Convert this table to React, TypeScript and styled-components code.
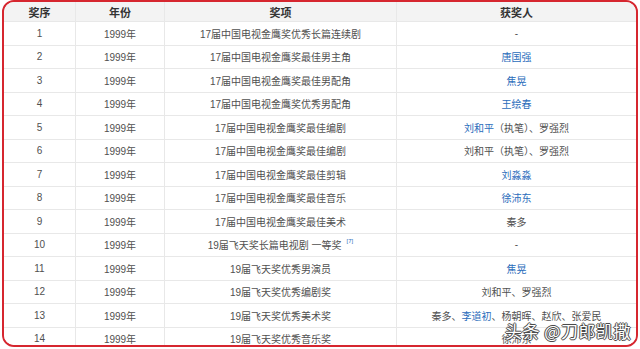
import * as React from "react"
import styled, { createGlobalStyle } from "styled-components"

const GlobalStyle = createGlobalStyle`
  html, body {
    margin: 0;
    padding: 0;
    background: #ffffff;
  }
  body {
    font-family: "Liberation Sans", "Noto Sans CJK SC", sans-serif;
  }
`

const Page = styled.div`
  position: relative;
  width: 640px;
  height: 349px;
  overflow: hidden;
  background: #ffffff;
`

const Frame = styled.div`
  box-sizing: border-box;
  width: 636px;
  height: 347px;
  margin-left: 2px;
  border: 2px solid #d6262f;
  border-radius: 12px;
  overflow: hidden;
`

const Row = styled.div<{ $head?: boolean }>`
  box-sizing: border-box;
  display: grid;
  grid-template-columns: 72px 89px 232px 1fr;
  height: ${(p) => (p.$head ? "20px" : "23.5px")};
  background: ${(p) => (p.$head ? "#f3f3f3" : "#ffffff")};
  border-bottom: 1px solid #e8e8e8;
  font-size: ${(p) => (p.$head ? "11px" : "10px")};
  font-weight: ${(p) => (p.$head ? "bold" : "normal")};
  color: ${(p) => (p.$head ? "#333333" : "#505050")};
`

const Cell = styled.div`
  display: flex;
  align-items: center;
  justify-content: center;
  border-right: 1px solid #e8e8e8;
  white-space: nowrap;

  &:last-child {
    border-right: none;
  }
`

const Link = styled.span`
  color: #2a6cbb;
`

const Ref = styled.sup`
  color: #2a6cbb;
  font-size: 6px;
  margin-left: 5px;
  position: relative;
  top: -2px;
`

const Watermark = styled.div`
  position: absolute;
  left: 505px;
  top: 318px;
  font-family: "Noto Sans CJK SC", sans-serif;
  font-size: 17px;
  color: #ffffff;
  letter-spacing: 0.5px;
  text-shadow: -1px 0 #4a4a4a, 1px 0 #4a4a4a, 0 -1px #4a4a4a, 0 1px #4a4a4a,
    0 0 2px rgba(0, 0, 0, 0.4);
`

type Award = {
  year: string
  name: React.ReactNode
  winner: React.ReactNode
}

const awards: Award[] = [
  { year: "1999年", name: "17届中国电视金鹰奖优秀长篇连续剧", winner: "-" },
  { year: "1999年", name: "17届中国电视金鹰奖最佳男主角", winner: <Link>唐国强</Link> },
  { year: "1999年", name: "17届中国电视金鹰奖最佳男配角", winner: <Link>焦晃</Link> },
  { year: "1999年", name: "17届中国电视金鹰奖优秀男配角", winner: <Link>王绘春</Link> },
  {
    year: "1999年",
    name: "17届中国电视金鹰奖最佳编剧",
    winner: (
      <span>
        <Link>刘和平</Link>（执笔）、罗强烈
      </span>
    ),
  },
  { year: "1999年", name: "17届中国电视金鹰奖最佳编剧", winner: "刘和平（执笔）、罗强烈" },
  { year: "1999年", name: "17届中国电视金鹰奖最佳剪辑", winner: <Link>刘淼淼</Link> },
  { year: "1999年", name: "17届中国电视金鹰奖最佳音乐", winner: <Link>徐沛东</Link> },
  { year: "1999年", name: "17届中国电视金鹰奖最佳美术", winner: "秦多" },
  {
    year: "1999年",
    name: (
      <span>
        19届飞天奖长篇电视剧 一等奖<Ref>[7]</Ref>
      </span>
    ),
    winner: "-",
  },
  { year: "1999年", name: "19届飞天奖优秀男演员", winner: <Link>焦晃</Link> },
  { year: "1999年", name: "19届飞天奖优秀编剧奖", winner: "刘和平、罗强烈" },
  {
    year: "1999年",
    name: "19届飞天奖优秀美术奖",
    winner: (
      <span>
        秦多、<Link>李道初</Link>、杨朝晖、赵欣、张爱民
      </span>
    ),
  },
  { year: "1999年", name: "19届飞天奖优秀音乐奖", winner: "徐沛东" },
]

const App = (): React.ReactElement => {
  return (
    <Page>
      <GlobalStyle />
      <Frame>
        <Row $head>
          <Cell>奖序</Cell>
          <Cell>年份</Cell>
          <Cell>奖项</Cell>
          <Cell>获奖人</Cell>
        </Row>
        {awards.map((a, i) => (
          <Row key={i}>
            <Cell>{i + 1}</Cell>
            <Cell>{a.year}</Cell>
            <Cell>{a.name}</Cell>
            <Cell>{a.winner}</Cell>
          </Row>
        ))}
      </Frame>
      <Watermark>头条 @刀郎凯撒</Watermark>
    </Page>
  )
}

export default App
